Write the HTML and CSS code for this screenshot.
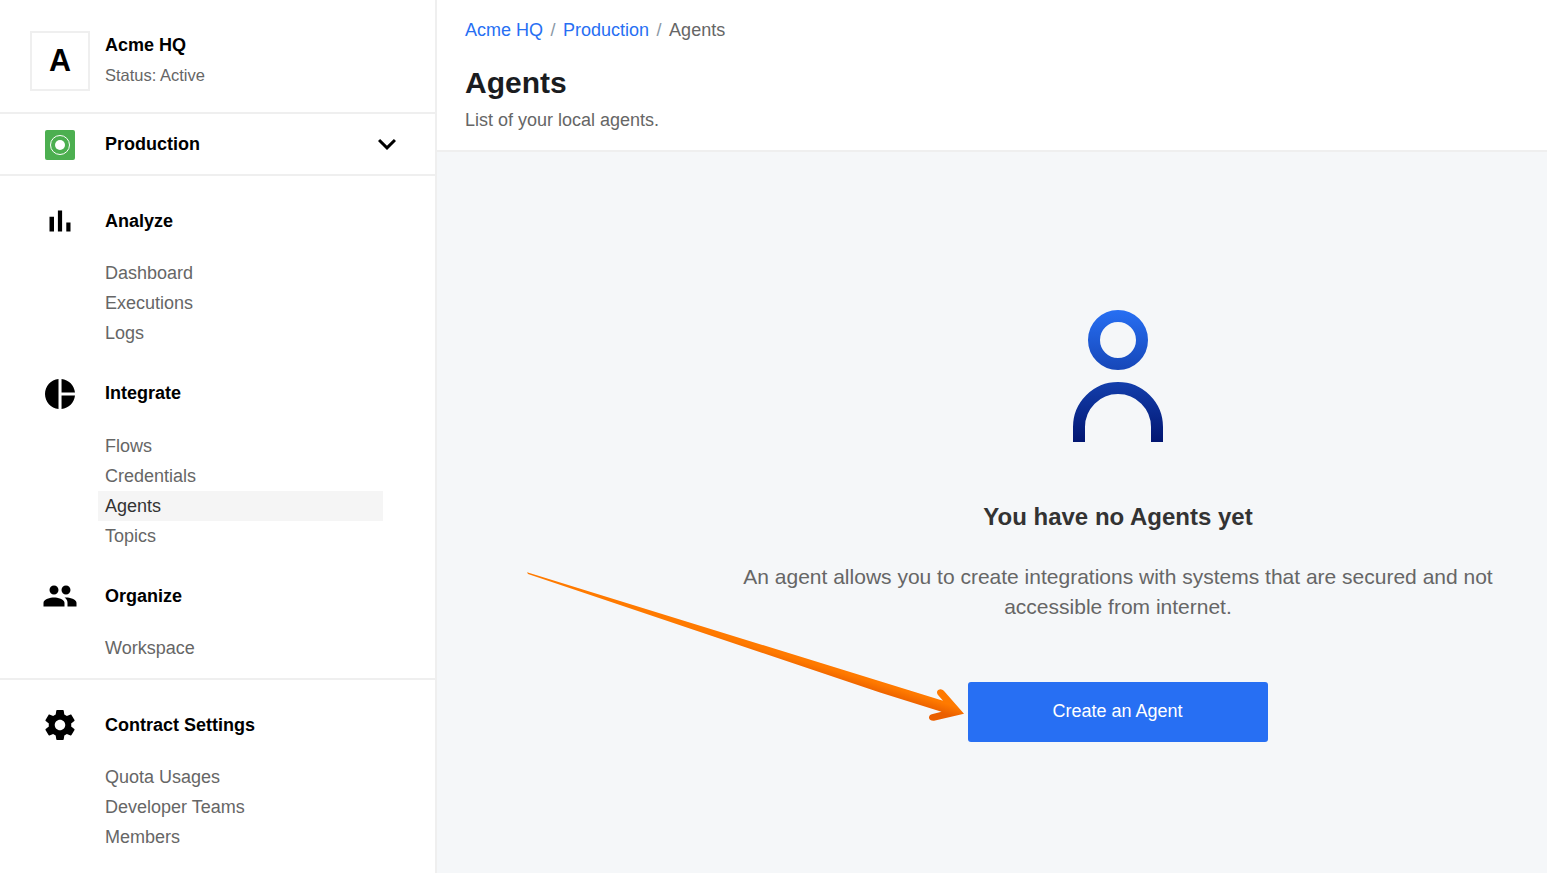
FILE: index.html
```html
<!DOCTYPE html>
<html lang="en">
<head>
<meta charset="utf-8">
<title>Agents</title>
<link rel="stylesheet" href="styles.css">
</head>
<body>
<div class="app">
  <aside class="sidebar">
    <div class="account">
      <div class="avatar">A</div>
      <div class="account-info">
        <div class="account-name">Acme HQ</div>
        <div class="account-status">Status: Active</div>
      </div>
    </div>
    <div class="workspace">
      <svg class="workspace-icon" viewBox="0 0 30 30"><rect width="30" height="30" rx="2" fill="#4caf50"/><circle cx="15" cy="15" r="9.5" fill="none" stroke="#fff"/><circle cx="15" cy="15" r="5" fill="#fff"/></svg>
      <span class="workspace-name">Production</span>
      <svg class="chevron" viewBox="0 0 24 24"><path d="M16.59 8.59L12 13.17 7.41 8.59 6 10l6 6 6-6z"/></svg>
    </div>
    <nav class="nav">
      <section class="group">
        <h2 class="group-title"><svg class="icon" viewBox="0 0 24 24"><path d="M5 9.2h3V19H5zM10.6 5h2.8v14h-2.8zm5.6 8H19v6h-2.8z"/></svg>Analyze</h2>
        <a class="item">Dashboard</a>
        <a class="item">Executions</a>
        <a class="item">Logs</a>
      </section>
      <section class="group group-integrate">
        <h2 class="group-title"><svg class="icon" viewBox="0 0 24 24"><path d="M11 2v20c-5.07-.5-9-4.79-9-10s3.93-9.5 9-10zm2.03 0v8.99H22c-.47-4.74-4.24-8.52-8.97-8.99zm0 11.01V22c4.74-.47 8.5-4.25 8.97-8.99h-8.97z"/></svg><span class="group-label">Integrate</span></h2>
        <a class="item">Flows</a>
        <a class="item">Credentials</a>
        <a class="item item-active">Agents</a>
        <a class="item">Topics</a>
      </section>
      <section class="group">
        <h2 class="group-title"><svg class="icon" viewBox="0 0 24 24"><path d="M16 11c1.66 0 2.99-1.34 2.99-3S17.66 5 16 5s-3 1.34-3 3 1.34 3 3 3zm-8 0c1.66 0 2.99-1.34 2.99-3S9.66 5 8 5 5 6.34 5 8s1.34 3 3 3zm0 2c-2.33 0-7 1.17-7 3.5V19h14v-2.5c0-2.33-4.67-3.5-7-3.5zm8 0c-.29 0-.62.02-.97.05 1.16.84 1.97 1.97 1.97 3.45V19h6v-2.5c0-2.33-4.67-3.5-7-3.5z"/></svg>Organize</h2>
        <a class="item">Workspace</a>
      </section>
    </nav>
    <nav class="nav nav-settings">
      <section class="group">
        <h2 class="group-title"><svg class="icon" viewBox="0 0 24 24"><path d="M19.43 12.98c.04-.32.07-.64.07-.98s-.03-.66-.07-.98l2.11-1.65c.19-.15.24-.42.12-.64l-2-3.46c-.12-.22-.39-.3-.61-.22l-2.49 1c-.52-.4-1.08-.73-1.69-.98l-.38-2.65C14.46 2.18 14.25 2 14 2h-4c-.25 0-.46.18-.49.42l-.38 2.65c-.61.25-1.17.59-1.69.98l-2.49-1c-.23-.09-.49 0-.61.22l-2 3.46c-.13.22-.07.49.12.64l2.11 1.65c-.04.32-.07.65-.07.98s.03.66.07.98l-2.11 1.65c-.19.15-.24.42-.12.64l2 3.46c.12.22.39.3.61.22l2.49-1c.52.4 1.08.73 1.69.98l.38 2.65c.03.24.24.42.49.42h4c.25 0 .46-.18.49-.42l.38-2.65c.61-.25 1.17-.59 1.69-.98l2.49 1c.23.09.49 0 .61-.22l2-3.46c.12-.22.07-.49-.12-.64l-2.11-1.65zM12 15.5c-1.93 0-3.5-1.57-3.5-3.5s1.57-3.5 3.5-3.5 3.5 1.57 3.5 3.5-1.57 3.5-3.5 3.5z"/></svg>Contract Settings</h2>
        <a class="item">Quota Usages</a>
        <a class="item">Developer Teams</a>
        <a class="item">Members</a>
      </section>
    </nav>
  </aside>
  <main class="main">
    <header class="header">
      <div class="crumbs"><a class="crumb-link">Acme HQ</a><span class="crumb-sep">/</span><a class="crumb-link">Production</a><span class="crumb-sep">/</span><span>Agents</span></div>
      <h1 class="title">Agents</h1>
      <p class="subtitle">List of your local agents.</p>
    </header>
    <div class="empty">
      <svg class="person" viewBox="0 0 90 132"><defs><linearGradient id="blue" gradientUnits="userSpaceOnUse" x1="0" y1="0" x2="0" y2="132"><stop offset="0" stop-color="#276ff3"/><stop offset="1" stop-color="#021671"/></linearGradient></defs><g fill="none" stroke="url(#blue)" stroke-width="12"><circle cx="45" cy="30" r="24"/><path d="M6 132V117a39 39 0 0 1 78 0v15"/></g></svg>
      <h2 class="empty-title">You have no Agents yet</h2>
      <p class="empty-text">An agent allows you to create integrations with systems that are secured and not accessible from internet.</p>
      <button class="create">Create an Agent</button>
    </div>
  </main>
  <svg class="arrow" viewBox="520 565 450 160"><defs><linearGradient id="orange" gradientUnits="userSpaceOnUse" x1="937.5" y1="701" x2="934.5" y2="711"><stop offset="0" stop-color="#ff7a00"/><stop offset="1" stop-color="#ea5f00"/></linearGradient></defs><path fill="url(#orange)" d="M527 572.2L880 681.2L943 700.8L937.8 694.8Q936 691.8 938.2 690Q941.3 688 943.8 690.8L964 713.8L934 720.7Q929.8 721 929 718Q928.8 715 931.8 714.2L941.5 711.8L880 692.5L528 574Z"/></svg>
</div>
</body>
</html>
```
FILE: styles.css
```css
* { box-sizing: border-box; }
body { margin: 0; font-family: "Liberation Sans", Arial, sans-serif; font-size: 18px; color: #666; background: #fff; }
h1, h2, p { margin: 0; }
.app { position: relative; display: flex; height: 873px; overflow: hidden; }
.sidebar { width: 437px; flex: none; border-right: 2px solid #efefef; }
.account { display: flex; gap: 15px; height: 114px; padding: 31px 0 0 30px; border-bottom: 2px solid #efefef; }
.avatar { width: 60px; height: 60px; border: 2px solid #efefef; color: #000; font-size: 30.5px; font-weight: 700; line-height: 54px; text-align: center; }
.account-name { color: #000; font-weight: 700; line-height: 28px; }
.account-status { font-size: 16.5px; line-height: 33px; }
.workspace { display: flex; align-items: center; height: 62px; padding: 0 30px 0 45px; border-bottom: 2px solid #efefef; }
.workspace-icon { width: 30px; height: 30px; margin-top: 2px; }
.workspace-name { flex: 1; margin-left: 30px; color: #000; font-weight: 700; }
.chevron { width: 36px; height: 36px; }
.nav { height: 504px; padding: 27px 0 0 42px; border-bottom: 2px solid #efefef; }
.nav-settings { border: 0; height: 193px; }
.group { margin-bottom: 28px; }
.group-integrate { margin-bottom: 27px; }
.group-title { display: flex; align-items: center; gap: 27px; height: 36px; margin-bottom: 19px; color: #000; font-size: 18px; line-height: 36px; }
.group-label { padding-bottom: 2px; }
.icon { width: 36px; height: 36px; }
.item { display: block; width: 285px; margin-left: 56px; padding-left: 7px; line-height: 30px; }
.item-active { background: #f5f5f5; color: #333; }
.main { flex: 1; display: flex; flex-direction: column; background: #f5f7f9; }
.header { height: 152px; padding: 15px 28px 0; background: #fff; border-bottom: 2px solid #efefef; }
.crumbs { line-height: 30px; }
.crumb-link { color: #276ff3; }
.crumb-sep { margin: 0 7.5px; color: #8a97a5; }
.title { margin-top: 15px; color: #1a1c1f; font-size: 30px; line-height: 45px; }
.subtitle { line-height: 30px; }
.empty { display: flex; flex-direction: column; align-items: center; width: 780px; margin-left: 291px; padding-top: 158px; }
.person { width: 90px; height: 132px; }
.empty-title { margin-top: 57px; color: #333; font-size: 24px; line-height: 36px; }
.empty-text { width: 770px; margin-top: 27px; font-size: 21px; line-height: 30px; text-align: center; }
.create { width: 300px; height: 60px; margin-top: 60px; padding: 0 1px 2px 0; border: 0; border-radius: 3px; background: #276ff3; color: #fff; font: inherit; }
/* Callout arrow over the page, pointing at the create button */
.arrow { position: absolute; left: 520px; top: 565px; width: 450px; height: 160px; }
```
